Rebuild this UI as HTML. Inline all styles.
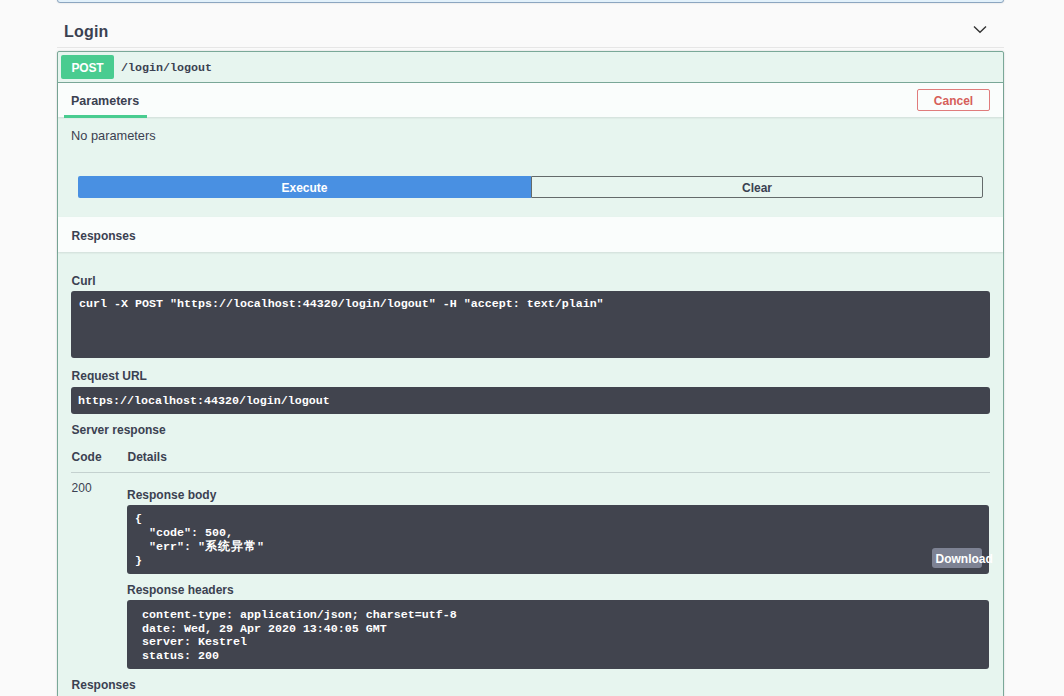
<!DOCTYPE html>
<html><head><meta charset="utf-8">
<style>
*{margin:0;padding:0;box-sizing:border-box}
html,body{width:1064px;height:696px;overflow:hidden;background:#fafafa}
body{position:relative;font-family:"Liberation Sans",sans-serif;color:#3b4151}
.a{position:absolute;white-space:pre}
.b{font-weight:bold}
.t12{font-size:12px;line-height:12px}
.m{font-family:"Liberation Mono",monospace;font-weight:bold;font-size:11.67px;line-height:14px}
.code{position:absolute;background:#41444e;border-radius:3px;color:#fff}
</style></head><body>

<!-- previous opblock (bottom edge) -->
<div class="a" style="left:57px;top:-20px;width:947px;height:23px;border:1px solid #8ca6c0;border-radius:3px;background:#e2f1fb;box-shadow:0 0 2px rgba(0,0,0,.15)"></div>

<!-- tag header -->
<div class="a b" style="left:64px;top:24.3px;font-size:16px;line-height:16px;letter-spacing:0.2px">Login</div>
<div class="a" style="left:57px;top:47px;width:947px;height:1px;background:#e6e6e6"></div>
<svg class="a" style="left:970px;top:22px" width="20" height="14" viewBox="0 0 20 14"><path d="M4 4.6 L10 10.2 L16 4.6" fill="none" stroke="#333" stroke-width="1.4"/></svg>

<!-- opblock post -->
<div class="a" style="left:57px;top:51px;width:947px;height:700px;border:1px solid #7aa898;border-radius:2px;background:rgba(73,204,144,.1);box-shadow:0 0 2px rgba(0,0,0,.19)"></div>
<div class="a" style="left:58px;top:82px;width:945px;height:1px;background:#7aa898"></div>
<div class="a b" style="left:61px;top:55px;width:53px;height:24px;background:#49cc90;border-radius:2px;color:#fff;font-size:12px;line-height:26px;text-align:center;letter-spacing:-0.2px">POST</div>
<div class="a m" style="left:121px;top:61px;color:#3b4151;line-height:14px">/login/logout</div>

<!-- parameters header -->
<div class="a" style="left:58px;top:83px;width:945px;height:34px;background:rgba(255,255,255,.8);box-shadow:0 1px 2px rgba(0,0,0,.1)"></div>
<div class="a b" style="left:71px;top:95.3px;font-size:12.5px;line-height:12.5px">Parameters</div>
<div class="a" style="left:64px;top:115px;width:83px;height:2.5px;background:#49cc90"></div>
<div class="a b" style="left:917px;top:89px;width:73px;height:21.5px;border:1.2px solid #e07c7c;border-radius:2px;color:#d65f5a;font-size:12px;line-height:23.5px;text-align:center">Cancel</div>

<div class="a" style="left:71px;top:129.6px;font-size:12.8px;line-height:12.8px">No parameters</div>

<!-- execute / clear -->
<div class="a b" style="left:78px;top:176px;width:453px;height:21.5px;background:#4990e2;border-radius:2px 0 0 2px;color:#fff;font-size:12px;line-height:25px;text-align:center">Execute</div>
<div class="a b" style="left:531px;top:176px;width:452px;height:21.5px;border:1.3px solid #646a6a;border-radius:0 2px 2px 0;font-size:12px;line-height:22.5px;text-align:center">Clear</div>

<!-- responses header -->
<div class="a" style="left:58px;top:217px;width:945px;height:35px;background:rgba(255,255,255,.8);box-shadow:0 1px 2px rgba(0,0,0,.1)"></div>
<div class="a b t12" style="left:71.6px;top:229.5px">Responses</div>

<div class="a b t12" style="left:71.6px;top:274.5px">Curl</div>
<div class="code" style="left:71px;top:291px;width:919px;height:66.5px"></div>
<div class="a m" style="left:79px;top:297px;color:#fff">curl -X POST "https://localhost:44320/login/logout" -H "accept: text/plain"</div>

<div class="a b t12" style="left:71.6px;top:370px">Request URL</div>
<div class="code" style="left:71px;top:387px;width:919px;height:26.5px"></div>
<div class="a m" style="left:78px;top:394.4px;color:#fff">https://localhost:44320/login/logout</div>

<div class="a b t12" style="left:71.6px;top:424.2px">Server response</div>
<div class="a b t12" style="left:71.6px;top:451.2px">Code</div>
<div class="a b t12" style="left:127.5px;top:451.2px">Details</div>
<div class="a" style="left:71px;top:472px;width:919px;height:1px;background:rgba(59,65,81,.2)"></div>

<div class="a t12" style="left:71.6px;top:481.6px">200</div>
<div class="a b t12" style="left:127px;top:488.8px">Response body</div>
<div class="code" style="left:127px;top:505px;width:862px;height:68.5px"></div>
<div class="a m" style="left:135px;top:512px;color:#fff">{
  "code": 500,
  "err": "<span style="letter-spacing:1px">系统异常</span>"
}</div>
<div class="a b t12" style="left:932px;top:548px;width:50px;height:20px;background:#7d8293;border-radius:3px"></div>
<div class="a b t12" style="left:935.5px;top:553.1px;color:#fff">Download</div>

<div class="a b t12" style="left:127px;top:583.6px">Response headers</div>
<div class="code" style="left:127px;top:600px;width:862px;height:69px"></div>
<div class="a m" style="left:135px;top:609px;color:#fff;line-height:13.7px"> content-type: application/json; charset=utf-8
 date: Wed, 29 Apr 2020 13:40:05 GMT
 server: Kestrel
 status: 200</div>

<div class="a b t12" style="left:71.6px;top:678.8px">Responses</div>

</body></html>
